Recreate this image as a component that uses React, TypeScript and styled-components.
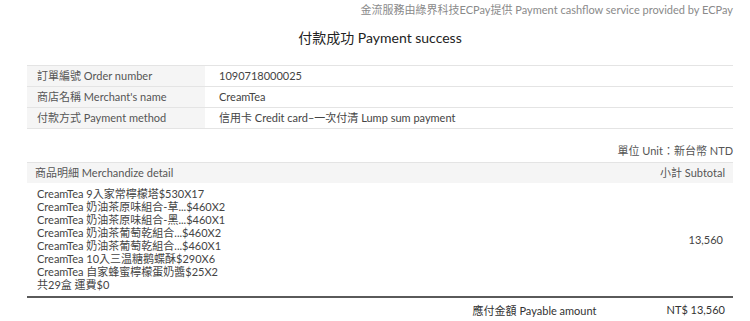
import React from 'react';
import styled, { createGlobalStyle } from 'styled-components';

const GlobalStyle = createGlobalStyle`
  html, body {
    margin: 0;
    padding: 0;
    background: #FFFFFF;
  }
  body {
    font-family: Lato, "Noto Sans CJK TC", sans-serif;
    color: #333333;
  }
`;

const Page = styled.div`
  width: 750px;
  height: 321px;
  overflow: hidden;
  padding: 0 17px 0 27px;
  box-sizing: border-box;
`;

const Provider = styled.div`
  height: 20px;
  line-height: 20px;
  text-align: right;
  font-size: 11px;
  color: #8a8a8a;
`;

const Title = styled.h1`
  margin: 0;
  height: 36px;
  line-height: 36px;
  text-align: center;
  font-size: 14px;
  font-weight: normal;
  color: #222222;
`;

const InfoTable = styled.div`
  margin-top: 9px;
  border-top: 1px solid #e4e4e4;
`;

const InfoRow = styled.div`
  display: flex;
  height: 20px;
  line-height: 20px;
  border-bottom: 1px solid #e4e4e4;
  font-size: 11px;
`;

const InfoLabel = styled.div`
  width: 178px;
  padding-left: 10px;
  box-sizing: border-box;
  background: #f5f5f5;
  color: #555555;
`;

const InfoValue = styled.div`
  flex: 1;
  padding-left: 14px;
  color: #444444;
`;

const Unit = styled.div`
  margin-top: 12px;
  height: 20px;
  line-height: 20px;
  text-align: right;
  font-size: 11px;
  color: #555555;
`;

const DetailHead = styled.div`
  display: flex;
  justify-content: space-between;
  height: 20px;
  line-height: 20px;
  margin-top: 1px;
  padding: 0 8px;
  background: #f5f5f5;
  border-top: 1px solid #e4e4e4;
  font-size: 11px;
  color: #555555;
`;

const DetailBody = styled.div`
  display: flex;
  justify-content: space-between;
  align-items: center;
  height: 113px;
  padding: 0 10px;
  font-size: 11px;
  color: #444444;
`;

const ItemList = styled.div`
  align-self: flex-start;
  line-height: 13px;
  padding-top: 4px;
`;

const TotalBar = styled.div`
  display: flex;
  justify-content: flex-end;
  align-items: center;
  height: 23px;
  border-top: 2px solid #5a5a5a;
  padding-right: 8px;
  font-size: 11px;
  color: #333333;
`;

const TotalLabel = styled.span`
  margin-right: 70px;
`;

const items = [
  'CreamTea 9入家常檸檬塔$530X17',
  'CreamTea 奶油茶原味組合-草...$460X2',
  'CreamTea 奶油茶原味組合-黑...$460X1',
  'CreamTea 奶油茶葡萄乾組合...$460X2',
  'CreamTea 奶油茶葡萄乾組合...$460X1',
  'CreamTea 10入三温糖鹅蝶酥$290X6',
  'CreamTea 自家蜂蜜檸檬蛋奶醬$25X2',
  '共29盒 運費$0',
];

const info = [
  ['訂單編號 Order number', '1090718000025'],
  ["商店名稱 Merchant's name", 'CreamTea'],
  ['付款方式 Payment method', '信用卡 Credit card–一次付清 Lump sum payment'],
];

const App = (): JSX.Element => (
  <Page>
    <GlobalStyle />
    <Provider>金流服務由綠界科技ECPay提供 Payment cashflow service provided by ECPay</Provider>
    <Title>付款成功 Payment success</Title>

    <InfoTable>
      {info.map(([label, value]) => (
        <InfoRow key={label}>
          <InfoLabel>{label}</InfoLabel>
          <InfoValue>{value}</InfoValue>
        </InfoRow>
      ))}
    </InfoTable>

    <Unit>單位 Unit：新台幣 NTD</Unit>

    <DetailHead>
      <span>商品明細 Merchandize detail</span>
      <span>小計 Subtotal</span>
    </DetailHead>
    <DetailBody>
      <ItemList>
        {items.map((item) => (
          <div key={item}>{item}</div>
        ))}
      </ItemList>
      <span>13,560</span>
    </DetailBody>

    <TotalBar>
      <TotalLabel>應付金額 Payable amount</TotalLabel>
      <span>NT$ 13,560</span>
    </TotalBar>
  </Page>
);

export default App;
